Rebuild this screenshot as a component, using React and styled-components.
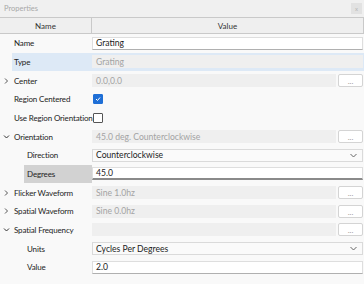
import styled, { createGlobalStyle } from 'styled-components';

const GlobalStyle = createGlobalStyle`
  html, body {
    margin: 0;
    padding: 0;
    background: #f9f9f9;
  }
  body {
    font-family: Lato, "Open Sans", sans-serif;
    font-size: 8.6px;
    color: #222;
  }
`;

const Panel = styled.div`
  width: 364px;
  height: 284px;
  display: flex;
  flex-direction: column;
  background: #f9f9f9;
  overflow: hidden;
`;

const TitleBar = styled.div`
  height: 17px;
  display: flex;
  align-items: center;
  justify-content: space-between;
  padding: 0 2px 0 4px;
  background: #f0f0f0;
  color: #a8a8a8;
  font-size: 7.5px;
`;

const CloseButton = styled.div`
  width: 11px;
  height: 11px;
  display: flex;
  align-items: center;
  justify-content: center;
  background: #e2e2e2;
  color: #b8b8b8;
  font-size: 6px;
`;

const Header = styled.div`
  display: grid;
  grid-template-columns: 91px 1fr;
  height: 15px;
  background: #efefef;
  border-top: 1px solid #c9c9c9;
  border-bottom: 1px solid #c9c9c9;
  border-right: 1px solid #c9c9c9;
`;

const HeaderCell = styled.div`
  display: flex;
  align-items: center;
  justify-content: center;
  color: #333;
  font-size: 8px;
  & + & {
    border-left: 1px solid #c9c9c9;
  }
`;

const Row = styled.div`
  display: grid;
  grid-template-columns: 92px 1fr;
  height: 18.67px;
  align-items: stretch;
  position: relative;
`;

const RowHighlight = styled.div`
  position: absolute;
  top: 0;
  bottom: 0;
  left: 12px;
  right: 0;
  background: #dde9f6;
`;

const LabelCell = styled.div`
  position: relative;
  display: flex;
  align-items: center;
  padding-left: ${(p) => (p.$depth ? 24 : 12)}px;
`;

const LabelText = styled.div`
  flex: 1;
  align-self: stretch;
  display: flex;
  align-items: center;
  padding-left: ${(p) => (p.$depth ? 3 : 2)}px;
  background: ${(p) => (p.$active ? '#d2d2d2' : 'transparent')};
  white-space: nowrap;
  color: #222;
  font-size: 8px;
  letter-spacing: -0.15px;
`;

const Expander = styled.svg`
  position: absolute;
  left: 3px;
  top: 50%;
  transform: translateY(-50%);
`;

const ValueCell = styled.div`
  position: relative;
  display: flex;
  align-items: center;
  gap: 2px;
  padding-right: 1px;
`;

const TextInput = styled.div`
  flex: 1;
  height: 13px;
  display: flex;
  align-items: center;
  padding-left: 3px;
  box-sizing: border-box;
  background: ${(p) => (p.$disabled ? '#efefef' : '#fff')};
  color: ${(p) => (p.$disabled ? '#a3a3a3' : '#222')};
  border: 1px solid ${(p) => (p.$disabled ? '#efefef' : '#dedede')};
  border-bottom: ${(p) =>
    p.$focused ? '2px solid #8a8a8a' : p.$disabled ? '1px solid #efefef' : '1px solid #b0b0b0'};
  white-space: nowrap;
`;

const Select = styled(TextInput)`
  background: #fafafa;
  justify-content: space-between;
  padding-right: 5px;
  border: 1px solid #dadada;
`;

const DotsButton = styled.div`
  width: 25px;
  height: 13px;
  box-sizing: border-box;
  display: flex;
  align-items: flex-end;
  justify-content: center;
  padding-bottom: 3px;
  background: #fff;
  border: 1px solid #d4d4d4;
  border-radius: 2px;
  color: #9a9a9a;
  font-size: 8px;
  line-height: 4px;
`;

const CheckBox = styled.div`
  width: 8px;
  height: 8px;
  margin-left: 1px;
  border-radius: 1px;
  display: flex;
  align-items: center;
  justify-content: center;
  background: ${(p) => (p.$checked ? '#1f6fd6' : '#fff')};
  border: 1px solid ${(p) => (p.$checked ? '#1f6fd6' : '#555')};
`;

const Chevron = ({ open }) => (
  <Expander width="7" height="7" viewBox="0 0 7 7">
    {open ? (
      <path d="M1 2 L3.5 4.5 L6 2" fill="none" stroke="#333" strokeWidth="1" />
    ) : (
      <path d="M2 1 L4.5 3.5 L2 6" fill="none" stroke="#555" strokeWidth="1" />
    )}
  </Expander>
);

const SelectArrow = () => (
  <svg width="7" height="5" viewBox="0 0 7 5">
    <path d="M0.5 1 L3.5 4 L6.5 1" fill="none" stroke="#666" strokeWidth="1" />
  </svg>
);

const Check = () => (
  <svg width="6" height="6" viewBox="0 0 6 6">
    <path d="M1 3 L2.5 4.5 L5 1.5" fill="none" stroke="#fff" strokeWidth="1" />
  </svg>
);

const rows = [
  { label: 'Name', kind: 'input', value: 'Grating' },
  { label: 'Type', kind: 'input', value: 'Grating', disabled: true, selected: true },
  { label: 'Center', kind: 'input', value: '0.0,0.0', disabled: true, button: true, expander: 'closed' },
  { label: 'Region Centered', kind: 'check', checked: true },
  { label: 'Use Region Orientation', kind: 'check' },
  { label: 'Orientation', kind: 'input', value: '45.0 deg. Counterclockwise', disabled: true, button: true, expander: 'open' },
  { label: 'Direction', depth: 1, kind: 'select', value: 'Counterclockwise' },
  { label: 'Degrees', depth: 1, kind: 'input', value: '45.0', active: true, focused: true },
  { label: 'Flicker Waveform', kind: 'input', value: 'Sine 1.0hz', disabled: true, button: true, expander: 'closed' },
  { label: 'Spatial Waveform', kind: 'input', value: 'Sine 0.0hz', disabled: true, button: true, expander: 'closed' },
  { label: 'Spatial Frequency', kind: 'input', value: '', disabled: true, button: true, expander: 'open' },
  { label: 'Units', depth: 1, kind: 'select', value: 'Cycles Per Degrees' },
  { label: 'Value', depth: 1, kind: 'input', value: '2.0' },
];

const PropertyRow = ({ row }) => (
  <Row>
    {row.selected && <RowHighlight />}
    <LabelCell $depth={row.depth}>
      {row.expander && <Chevron open={row.expander === 'open'} />}
      <LabelText $active={row.active} $depth={row.depth}>
        {row.label}
      </LabelText>
    </LabelCell>
    <ValueCell>
      {row.kind === 'input' && (
        <TextInput $disabled={row.disabled} $focused={row.focused}>
          {row.value}
        </TextInput>
      )}
      {row.kind === 'select' && (
        <Select>
          {row.value}
          <SelectArrow />
        </Select>
      )}
      {row.kind === 'check' && (
        <CheckBox $checked={row.checked}>{row.checked && <Check />}</CheckBox>
      )}
      {row.button && <DotsButton>...</DotsButton>}
    </ValueCell>
  </Row>
);

const App = () => {
  return (
    <Panel>
      <GlobalStyle />
      <TitleBar>
        Properties
        <CloseButton>x</CloseButton>
      </TitleBar>
      <Header>
        <HeaderCell>Name</HeaderCell>
        <HeaderCell>Value</HeaderCell>
      </Header>
      {rows.map((row) => (
        <PropertyRow key={row.label} row={row} />
      ))}
    </Panel>
  );
};

export default App;
